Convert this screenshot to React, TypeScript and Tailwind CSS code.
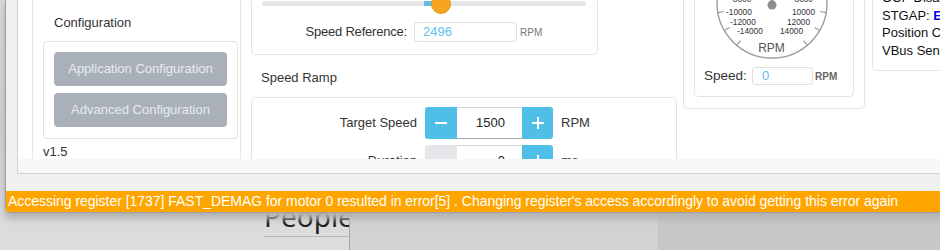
import React from 'react';

const BLUE = 'bg-[#4fbfe8]';

function MinusIcon() {
  return (
    <svg width="12" height="12" viewBox="0 0 12 12">
      <rect x="0" y="5" width="12" height="2" fill="#fff" />
    </svg>
  );
}

function PlusIcon() {
  return (
    <svg width="12" height="12" viewBox="0 0 12 12">
      <rect x="0" y="5" width="12" height="2" fill="#fff" />
      <rect x="5" y="0" width="2" height="12" fill="#fff" />
    </svg>
  );
}

function Stepper({ value, minusDisabled }: { value: string; minusDisabled?: boolean }) {
  return (
    <div className="flex h-[32px] w-[128px] shrink-0">
      {minusDisabled ? (
        <div className="w-[32px] rounded-l-[3px] bg-[#e4e6e9]" />
      ) : (
        <div className={`flex w-[32px] items-center justify-center rounded-l-[3px] ${BLUE}`}>
          <MinusIcon />
        </div>
      )}
      <div className="flex w-[65px] items-center justify-end border-y border-t-[#d3d6da] border-b-[#a3a9b0] bg-white pr-[17px] text-[13px] text-[#222]">
        {value}
      </div>
      <div className={`flex w-[31px] items-center justify-center rounded-r-[3px] ${BLUE}`}>
        <PlusIcon />
      </div>
    </div>
  );
}

function Gauge() {
  const cx = 65;
  const cy = 3;
  const ticks = [10, 30, 50];
  return (
    <svg width="130" height="62" viewBox="0 0 130 62" className="ml-[12px] block">
      <circle cx={cx} cy={cy} r="55" fill="none" stroke="#9b9b9b" strokeWidth="1.4" />
      {ticks.map((deg) => {
        const a = (deg * Math.PI) / 180;
        return [-1, 1].map((s) => (
          <line
            key={`${deg}-${s}`}
            x1={cx + s * 55 * Math.cos(a)}
            y1={cy + 55 * Math.sin(a)}
            x2={cx + s * 49 * Math.cos(a)}
            y2={cy + 49 * Math.sin(a)}
            stroke="#9b9b9b"
            strokeWidth="1.2"
          />
        ));
      })}
      <line x1={cx} y1={cy + 2} x2={cx} y2={-20} stroke="#4fbfe8" strokeWidth="3" />
      <circle cx={cx} cy={cy + 2} r="4.5" fill="#8e8e8e" />
      <g fontSize="8.3" fill="#333" fontFamily="'Liberation Sans', Arial, sans-serif">
        <text x="23" y="2">-8000</text>
        <text x="106" y="2" textAnchor="end">8000</text>
        <text x="19" y="15">-10000</text>
        <text x="108" y="15" textAnchor="end">10000</text>
        <text x="23" y="25">-12000</text>
        <text x="103" y="25" textAnchor="end">12000</text>
        <text x="30" y="34">-14000</text>
        <text x="96" y="34" textAnchor="end">14000</text>
      </g>
      <text x="64.5" y="52" fontSize="12" fill="#555" textAnchor="middle" fontFamily="'Liberation Sans', Arial, sans-serif">
        RPM
      </text>
    </svg>
  );
}

export default function App() {
  return (
    <div className="relative h-[250px] w-[940px] overflow-hidden font-['Liberation_Sans',Arial,sans-serif]">
      {/* desktop behind the window */}
      <div className="flex h-full">
        <div className="h-full w-[350px] shrink-0 overflow-hidden border-r border-[#a6a6a6] bg-gradient-to-b from-[#dadada] via-[#d0d0d0] to-[#dedede] pl-[264px] pt-[197px]">
          <div className="whitespace-nowrap font-['Noto_Sans',sans-serif] text-[28px] leading-[38px] text-[#1e1e1e]">People</div>
          <div className="mt-[1px] h-px bg-[#b9b9b9]" />
        </div>
        <div className="h-full w-[308px] shrink-0 bg-gradient-to-b from-[#c2c2c2] to-[#d3d3d3]" />
        <div className="h-full flex-1 bg-gradient-to-b from-[#b8b8b8] to-[#c8c8c8]" />
      </div>

      {/* app window */}
      <div className="absolute left-[5px] top-0 flex h-[213px] w-[960px] flex-col rounded-bl-[6px] border-b border-l border-[#9d9d9d] bg-[#f0f0f0] shadow-[0_5px_6px_1px_rgba(180,180,180,1)]">
        <div className="ml-[11px] flex h-[174px] flex-col border-b border-l border-[#d2d2d2]">
          <div className="flex h-[159px] items-start overflow-hidden bg-white text-[13px] text-[#333]">
            {/* sidebar */}
            <div className="ml-[14px] h-[200px] w-[209px] shrink-0 border-x border-[#e6e6e6] pt-[15px]">
              <div className="pl-[21px] leading-[16px]">Configuration</div>
              <div className="ml-[10px] mt-[10px] flex w-[195px] flex-col gap-[7px] rounded-[4px] border border-[#e2e2e2] px-[10px] pb-[11px] pt-[10px]">
                <div className="flex h-[34px] items-center justify-center rounded-[4px] bg-[#a9b0ba] text-[#e8ebef]">
                  Application Configuration
                </div>
                <div className="flex h-[34px] items-center justify-center rounded-[4px] bg-[#a9b0ba] text-[#e8ebef]">
                  Advanced Configuration
                </div>
              </div>
              <div className="ml-[10px] mt-[5px] leading-[16px]">v1.5</div>
            </div>

            {/* speed column */}
            <div className="ml-[10px] w-[426px] shrink-0">
              <div className="h-[54px] w-[347px] rounded-b-[5px] border-x border-b border-[#e4e4e4]">
                <div className="relative ml-[10px] mt-px h-[5px] w-[324px] rounded-full bg-[#e5e5e5]">
                  <div className="absolute left-[162px] top-0 h-[5px] w-[17px] bg-[#5bc0eb]" />
                  <div className="absolute left-[169px] top-[-7px] h-[20px] w-[20px] rounded-full border border-[#e0981e] bg-[#f7a51f]" />
                </div>
                <div className="mt-[16px] flex items-center">
                  <div className="w-[155px] text-right tracking-[-0.2px]">Speed Reference:</div>
                  <div className="ml-[7px] flex h-[20px] w-[103px] items-center rounded-[3px] border border-[#e0e0e0] pl-[8px] text-[#5bc0eb]">
                    2496
                  </div>
                  <div className="ml-[3px] text-[10px] text-[#777]">RPM</div>
                </div>
              </div>

              <div className="mt-[15px] pl-[10px] leading-[16px]">Speed Ramp</div>

              <div className="mt-[11px] h-[100px] rounded-[5px] border border-[#e4e4e4] pt-[9px]">
                <div className="flex items-center">
                  <div className="w-[165px] text-right">Target Speed</div>
                  <div className="ml-[8px]">
                    <Stepper value="1500" />
                  </div>
                  <div className="ml-[8px]">RPM</div>
                </div>
                <div className="mt-[6px] flex items-center">
                  <div className="w-[165px] text-right">Duration</div>
                  <div className="ml-[8px]">
                    <Stepper value="0" minusDisabled />
                  </div>
                  <div className="ml-[8px]">ms</div>
                </div>
              </div>
            </div>

            {/* gauge */}
            <div className="ml-[6px] h-[109px] w-[182px] shrink-0 rounded-b-[5px] border-x border-b border-[#e4e4e4]">
              <div className="ml-[10px] h-[97px] w-[160px] rounded-b-[5px] border-x border-b border-[#e4e4e4]">
                <Gauge />
                <div className="mt-[5px] flex h-[18px] items-center">
                  <div className="ml-[9px] w-[48px] text-[13.5px]">Speed:</div>
                  <div className="flex h-[18px] w-[61px] items-center rounded-[3px] border border-[#e0e0e0] pl-[9px] text-[#5bc0eb]">
                    0
                  </div>
                  <div className="ml-[2px] text-[10px] font-bold text-[#666]">RPM</div>
                </div>
              </div>
            </div>

            {/* status */}
            <div className="ml-[7px] h-[71px] w-[120px] shrink-0 rounded-bl-[5px] border-b border-l border-[#e4e4e4] pl-[9px]">
              <div className="-mt-[11px] whitespace-nowrap leading-[17.5px] text-[#111]">
                <div>OCP Disabled</div>
                <div>
                  STGAP: <span className="font-bold text-[#0000ee]">Enabled</span>
                </div>
                <div>Position Control</div>
                <div>VBus Sensing</div>
              </div>
            </div>
          </div>
          <div className="h-[14px] bg-[#f7f7f7]" />
        </div>

        <div className="mt-[17px] flex h-[21px] items-center whitespace-nowrap bg-[#ffa500] pl-[2px] text-[14px] tracking-[-0.03px] text-white">
          Accessing register [1737] FAST_DEMAG for motor 0 resulted in error[5] . Changing register's access accordingly to avoid getting this error again
        </div>
      </div>
    </div>
  );
}
